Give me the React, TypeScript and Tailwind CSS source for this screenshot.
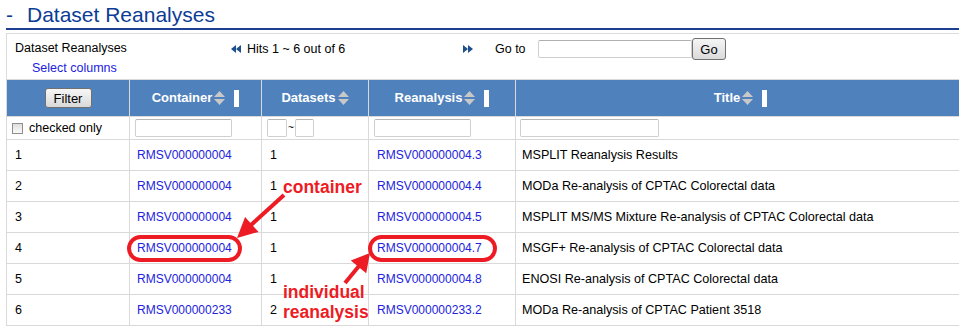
const rows = [
  ['1', 'RMSV000000004', '1', 'RMSV000000004.3', 'MSPLIT Reanalysis Results'],
  ['2', 'RMSV000000004', '1', 'RMSV000000004.4', 'MODa Re-analysis of CPTAC Colorectal data'],
  ['3', 'RMSV000000004', '1', 'RMSV000000004.5', 'MSPLIT MS/MS Mixture Re-analysis of CPTAC Colorectal data'],
  ['4', 'RMSV000000004', '1', 'RMSV000000004.7', 'MSGF+ Re-analysis of CPTAC Colorectal data'],
  ['5', 'RMSV000000004', '1', 'RMSV000000004.8', 'ENOSI Re-analysis of CPTAC Colorectal data'],
  ['6', 'RMSV000000233', '2', 'RMSV000000233.2', 'MODa Re-analysis of CPTAC Patient 3518'],
]

function SortIcon() {
  return (
    <svg width="11" height="14" viewBox="0 0 11 14" className="ml-[2px] shrink-0">
      <path d="M5.5 0 L11 6 H0 Z" fill="#c8c8c8" />
      <path d="M0 8 H11 L5.5 14 Z" fill="#c8c8c8" />
    </svg>
  )
}

function Bar() {
  return <span className="ml-[9px] inline-block w-[5px] h-[17px] bg-white" />
}

function HeadCell({ label, bar = true }: { label: string; bar?: boolean }) {
  return (
    <th className="border border-[#d9d9d9] p-0 font-bold">
      <div className="flex items-center justify-center text-white text-[13px]">
        {label}
        <SortIcon />
        {bar && <Bar />}
      </div>
    </th>
  )
}

function TextBox({ w }: { w: string }) {
  return <span className={`inline-block ${w} h-[18px] border border-[#cfcfcf] border-t-[#b5b5b5] rounded-[2px] bg-white`} />
}

function Arrows({ dir }: { dir: 'left' | 'right' }) {
  return (
    <svg width="10" height="8" viewBox="0 0 10 8" className="shrink-0">
      {dir === 'left' ? (
        <>
          <path d="M5 0 L0 4 L5 8 Z" fill="#1d4f8b" />
          <path d="M10 0 L5 4 L10 8 Z" fill="#1d4f8b" />
        </>
      ) : (
        <>
          <path d="M0 0 L5 4 L0 8 Z" fill="#1d4f8b" />
          <path d="M5 0 L10 4 L5 8 Z" fill="#1d4f8b" />
        </>
      )}
    </svg>
  )
}

export default function App() {
  return (
    <div className="relative w-[959px] h-[333px] overflow-hidden bg-white pl-[6px] text-black" style={{ fontFamily: '"Liberation Sans", Arial, sans-serif' }}>
      <h1 className="h-[28px] leading-[30px] text-[21px] text-[#0c3c95] border-b-2 border-[#1c3f94] box-content">
        <span className="mr-[14px]">-</span>Dataset Reanalyses
      </h1>

      <div className="mt-[3px] w-[959px] border-t border-[#dcdcdc]">
        <div className="flex h-[45px] text-[12.5px] border-l border-[#dcdcdc]">
          <div className="w-[224px] pl-[8px] pt-[6px]">
            <div className="leading-[16px]">Dataset Reanalyses</div>
            <div className="mt-[4px] pl-[17px] leading-[16px] text-[#2222dd]">Select columns</div>
          </div>
          <div className="flex items-center h-[28px] mt-[1px]">
            <div className="flex items-center w-[232px]">
              <Arrows dir="left" />
              <span className="ml-[6px]">Hits 1 ~ 6 out of 6</span>
            </div>
            <div className="flex items-center w-[75px]">
              <Arrows dir="right" />
              <span className="ml-[22px]">Go to</span>
            </div>
            <span className="inline-block w-[154px] h-[18px] border border-[#cfcfcf] border-t-[#b0b0b0] rounded-[2px]" />
            <button className="w-[34px] h-[22px] border border-[#707070] rounded-[3px] bg-linear-to-b from-[#f5f5f5] to-[#dadada] text-[13px] leading-none">Go</button>
          </div>
        </div>

        <table className="table-fixed border-collapse w-[959px] text-[12px]">
          <colgroup>
            <col className="w-[123px]" />
            <col className="w-[132px]" />
            <col className="w-[107px]" />
            <col className="w-[147px]" />
            <col className="w-[450px]" />
          </colgroup>
          <thead>
            <tr className="h-[37px] bg-[#4f81bd]">
              <th className="border border-[#d9d9d9] p-0">
                <div className="flex justify-center">
                  <button className="w-[47px] h-[20px] border border-[#707070] rounded-[3px] bg-linear-to-b from-[#f7f7f7] to-[#d9d9d9] text-[13px] font-normal leading-none text-black">Filter</button>
                </div>
              </th>
              <HeadCell label="Container" />
              <HeadCell label="Datasets" bar={false} />
              <HeadCell label="Reanalysis" />
              <HeadCell label="Title" />
            </tr>
          </thead>
          <tbody>
            <tr className="h-[23px]">
              <td className="border border-[#d9d9d9] pl-[5px] p-0 text-[12.5px]">
                <div className="flex items-center">
                  <span className="inline-block w-[11px] h-[11px] border border-[#8e8e8e] bg-linear-to-b from-[#dedede] to-[#fbfbfb]" />
                  <span className="ml-[6px]">checked only</span>
                </div>
              </td>
              <td className="border border-[#d9d9d9] pl-[5px] p-0"><div className="flex"><TextBox w="w-[97px]" /></div></td>
              <td className="border border-[#d9d9d9] pl-[5px] p-0">
                <div className="flex items-center">
                  <TextBox w="w-[20px]" />
                  <span className="mx-[1px] text-[10px] leading-none">~</span>
                  <TextBox w="w-[19px]" />
                </div>
              </td>
              <td className="border border-[#d9d9d9] pl-[5px] p-0"><div className="flex"><TextBox w="w-[97px]" /></div></td>
              <td className="border border-[#d9d9d9] pl-[4px] p-0"><div className="flex"><TextBox w="w-[139px]" /></div></td>
            </tr>
            {rows.map((r) => (
              <tr key={r[0]} className="h-[31px]">
                <td className="border border-[#d9d9d9] px-[8px] text-[12.5px]">{r[0]}</td>
                <td className="border border-[#d9d9d9] pl-[7px] text-[#2222dd]">{r[1]}</td>
                <td className="border border-[#d9d9d9] px-[8px] text-[12.5px]">{r[2]}</td>
                <td className="border border-[#d9d9d9] px-[8px] text-[#2222dd]">{r[3]}</td>
                <td className="border border-[#d9d9d9] pl-[6px] text-[12.6px]">{r[4]}</td>
              </tr>
            ))}
          </tbody>
        </table>
      </div>

      {/* annotations */}
      <svg className="absolute left-0 top-0 pointer-events-none" width="959" height="333" viewBox="0 0 959 333">
        <rect x="129" y="237" width="111" height="23" rx="11.5" fill="none" stroke="#ed1c24" strokeWidth="4" />
        <rect x="370" y="237" width="125" height="23" rx="11.5" fill="none" stroke="#ed1c24" strokeWidth="4" />
        <line x1="284" y1="195" x2="251" y2="225" stroke="#ed1c24" strokeWidth="4" />
        <path d="M237 238 L258.5 231.9 L245.1 217.1 Z" fill="#ed1c24" />
        <line x1="345" y1="283" x2="359" y2="266" stroke="#ed1c24" strokeWidth="4" />
        <path d="M370 253 L366.2 273.2 L350.8 260.4 Z" fill="#ed1c24" />
      </svg>
      <span className="absolute left-[283px] top-[179px] text-[17.5px] leading-[17px] font-bold text-[#ed1c24]">container</span>
      <div className="absolute left-[283px] top-[282px] text-[17.5px] leading-[20px] font-bold text-[#ed1c24]">
        <div>individual</div>
        <div>reanalysis</div>
      </div>
    </div>
  )
}
